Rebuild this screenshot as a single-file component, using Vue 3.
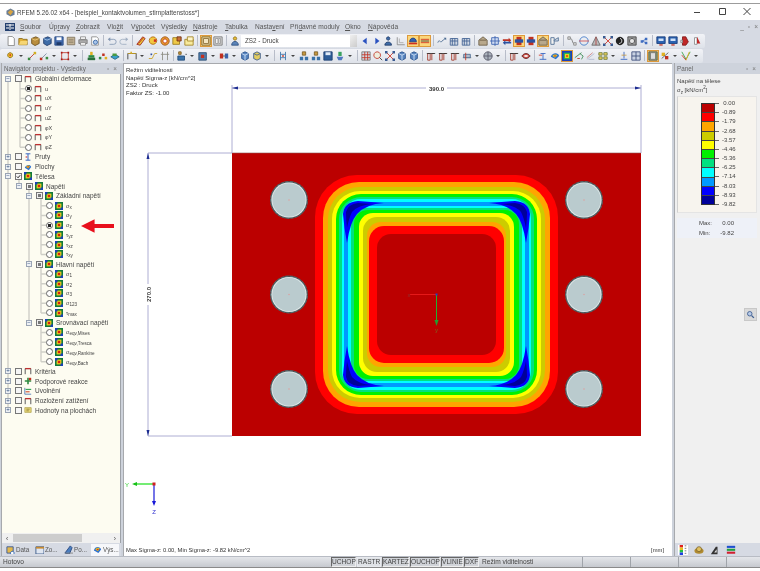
<template>
  <div class="window">
    <header class="titlebar">
      <svg class="app-icon" viewBox="0 0 10 10">
        <path d="M5 .5 9.5 3v4.5L5 9.5.5 7V3z" fill="#6d7f94" />
        <path d="M5 2 8 4 5 8 2 5z" fill="#d9a441" />
      </svg>
      <span class="title">RFEM 5.26.02 x64 - [beispiel_kontaktvolumen_stirnplattenstoss*]</span>
      <div class="win-btns">
        <svg viewBox="0 0 10 10"><path d="M2 5.5h6" stroke="#444" /></svg>
        <svg viewBox="0 0 10 10"><path d="M2.5 1.5h6v6h-6z" fill="none" stroke="#444" /></svg>
        <svg viewBox="0 0 10 10"><path d="m1.5 1 7 7m0-7-7 7" stroke="#444" /></svg>
      </div>
    </header>

    <nav class="menubar">
      <svg class="menu-logo" viewBox="0 0 10 10">
        <path d="M0 1h10v8H0z" fill="#24406f" />
        <path d="M1 3h8M1 6h3m2 0h3M5 2v6" stroke="#fff" />
      </svg>
      <span v-for="m in menus" :key="m.a + m.b" class="menu-item" :style="{ width: m.w + 'px' }">{{ m.a }}<u>{{ m.u }}</u>{{ m.b }}</span>
      <div class="mdi-btns"><span>_</span><span>▫</span><span>×</span></div>
    </nav>

    <div class="toolrow">
      <div class="tools">
        <template v-for="(t, i) in row1" :key="i">
          <span v-if="t.sep" class="sep"></span>
          <span v-else-if="t.arrow" class="drop"></span>
          <div v-else-if="t.select" class="case-select"><span>ZS2 - Druck</span><i></i></div>
          <svg v-else class="tool" :class="{ on: t.on }" viewBox="0 0 12 12">
            <path v-for="(p, j) in icons[t.name]" :key="j" :d="p[0]" :fill="p[1]" :stroke="p[2] || 'none'" stroke-width="1" />
          </svg>
        </template>
      </div>
    </div>
    <div class="toolrow">
      <div class="tools">
        <template v-for="(t, i) in row2" :key="i">
          <span v-if="t.sep" class="sep"></span>
          <span v-else-if="t.arrow" class="drop"></span>
          <svg v-else class="tool" :class="{ on: t.on }" viewBox="0 0 12 12">
            <path v-for="(p, j) in icons[t.name]" :key="j" :d="p[0]" :fill="p[1]" :stroke="p[2] || 'none'" stroke-width="1" />
          </svg>
        </template>
      </div>
    </div>

    <main class="workspace">
      <aside class="navigator">
        <div class="dock-head">
          <span>Navigátor projektu - Výsledky</span>
          <em>▫</em><em>×</em>
        </div>
        <div class="tree">
          <svg class="tree-lines" viewBox="0 0 118 360">
            <path :d="treeLines" fill="none" stroke="#cfcfc8" stroke-width="1.4" />
          </svg>
          <div v-for="n in tree" :key="n.id" class="row" :style="{ paddingLeft: n.x + 'px' }">
            <span v-if="n.exp" class="expander" :style="{ marginLeft: n.expX + 'px' }">{{ n.exp }}</span>
            <span v-if="n.radio" class="radio" :class="{ dot: n.sel }"></span>
            <span v-else class="check" :class="n.state">
              <svg v-if="n.state === 'checked'" viewBox="0 0 6 6"><path d="m1 3 1.500 1.500L5 1.500" fill="none" stroke="#222" stroke-width="1.200" /></svg>
            </span>
            <svg class="node-icon" viewBox="0 0 10 10">
              <template v-if="n.icon === 'frame'">
                <path d="M1.500 9V2h7v7" fill="none" stroke="#555" stroke-width="1.200" />
                <path d="M1.500 2h7" stroke="#c03030" stroke-width="1.600" />
              </template>
              <template v-else-if="n.icon === 'beam'">
                <path d="M2 9h6M5 9V1M2 1h6" stroke="#3060c0" stroke-width="1.200" />
                <path d="M2 5h2" stroke="#d03030" stroke-width="1.400" />
              </template>
              <template v-else-if="n.icon === 'surf'">
                <path d="M1 6c1-4 7-5 8-1L6 9z" fill="#2a6fd0" />
                <path d="M2.500 5c1-2 4-2.500 5-1L5.500 7z" fill="#e0c020" />
                <path d="M4 4.800c1-1 2-1 2.500 0L5 6z" fill="#e03020" />
              </template>
              <template v-else-if="n.icon === 'react'">
                <path d="M4 1h2v3h3v2H6v3H4V6H1V4h3z" fill="#2e8b40" />
                <path d="M6 1h3v3H6z" fill="#c03020" />
              </template>
              <template v-else-if="n.icon === 'rel'">
                <path d="M1 1v8h8" fill="none" stroke="#4070b0" />
                <path d="M2 3h7" stroke="#30a050" stroke-width="1.400" />
                <path d="M2 6h5" stroke="#d05030" stroke-width="1.400" />
              </template>
              <template v-else-if="n.icon === 'note'">
                <path d="M1 2h8v6H1z" fill="#e6d67a" stroke="#a99a40" stroke-width=".8" />
                <path d="M3 4h4M3 6h3" stroke="#7a6a20" stroke-width=".8" />
              </template>
              <template v-else>
                <path d="M0 0h10v10H0z" fill="#0f7a3a" />
                <path d="M2 2h6v6H2z" fill="#e8d020" />
                <path d="M3.500 3.500h3v3h-3z" fill="#d82010" />
                <path d="M0 0h3v3H0zM7 7h3v3H7z" fill="#1c3fb8" />
              </template>
            </svg>
            <span class="label" :class="{ small: n.radio }">{{ n.text }}<sub v-if="n.sub">{{ n.sub }}</sub></span>
          </div>
          <svg class="red-arrow" viewBox="0 0 34 14">
            <path d="M0 7 14 0v5h20v4H14v5z" fill="#e8101c" />
          </svg>
        </div>
        <div class="hscroll"><span>‹</span><i></i><span>›</span></div>
        <div class="dock-tabs">
          <span v-for="t in navTabs" :key="t.text" class="dock-tab" :class="{ current: t.current }">
            <svg viewBox="0 0 10 10">
              <path v-for="(p, j) in icons[t.icon]" :key="j" :d="p[0]" :fill="p[1]" :stroke="p[2] || 'none'" />
            </svg>
            {{ t.text }}
          </span>
        </div>
      </aside>

      <section class="view">
        <div class="view-info">
          <div>Režim viditelnosti</div>
          <div>Napětí Sigma-z [kN/cm^2]</div>
          <div>ZS2 : Druck</div>
          <div>Faktor ZS: -1.00</div>
        </div>
        <svg class="canvas" viewBox="124 63 548 493">
          <rect x="232" y="153" width="409" height="283" fill="#bb0000" />
          <path d="M232 153h409" stroke="#8a5050" stroke-width=".6" />
          <rect
            v-for="b in bands"
            :key="b.x"
            :x="b.x"
            :y="b.y"
            :width="873 - 2 * b.x"
            :height="589 - 2 * b.y"
            :rx="b.r"
            :fill="b.c"
          />
          <g v-for="(tr, i) in mirrors" :key="i" :transform="tr">
            <path d="M343 214Q344 202 358 201L384 203Q366 204 357 214 350 222 347 243 344 228 343 214Z" fill="#0000ff" />
            <path d="M346 212Q348 204 358 203L372 204Q358 205 352 212 349 218 347 228 346 220 346 212Z" fill="#00009a" />
          </g>

          <g v-for="b in bolts" :key="b[0] + '-' + b[1]">
            <circle :cx="b[0]" :cy="b[1]" r="19" fill="#4f686c" />
            <circle :cx="b[0]" :cy="b[1]" r="18.400" fill="none" stroke="#6a2a2a" stroke-width=".8" stroke-dasharray="1.500 3" />
            <circle :cx="b[0]" :cy="b[1]" r="17.600" fill="#e4ecec" />
            <circle :cx="b[0]" :cy="b[1]" r="16.700" fill="#bacbce" />
            <circle :cx="b[0]" :cy="b[1]" r=".7" fill="#e09a9a" />
          </g>

          <g fill="none" stroke="#9b9bc8" stroke-width=".8">
            <path d="M232 88h409M232 85v68M641 85v68" />
            <path d="M148 153h84M148 436h84M148 153v283" />
          </g>
          <g fill="#1c2c90">
            <path d="m232 88 6-1.500v3zM641 88l-6-1.500v3zM148 153l-1.500 6h3zM148 436l-1.500-6h3z" />
          </g>
          <rect x="426" y="84" width="21" height="8" fill="#fff" />
          <text x="436.500" y="90.500" class="dim">390.0</text>
          <rect x="144" y="284" width="8" height="21" fill="#fff" />
          <text class="dim" transform="translate(150.500 294.500) rotate(-90)">270.0</text>

          <path d="M437 294.500h-27" stroke="#f02020" stroke-width=".8" />
          <path d="M436.500 295v26" stroke="#20b030" />
          <path d="m436.500 326-2-6h4z" fill="#20a030" />
          <rect x="435.500" y="293.500" width="2" height="2" fill="#2040c0" />
          <text x="409" y="297" class="axis" fill="#903030">x</text>
          <text x="436.500" y="325" class="axis" fill="#806020" dy="7">y</text>

          <path d="M154 484h-20" stroke="#18e018" stroke-width="1.200" />
          <path d="m132 484 5-2v4z" fill="#18c018" />
          <path d="M154 484v19" stroke="#1818d8" stroke-width="1.200" />
          <path d="m154 506-2-5h4z" fill="#1818d8" />
          <rect x="152.500" y="482.500" width="3" height="3" fill="#d02020" />
          <text x="127" y="487" class="axis" fill="#30d030">Y</text>
          <text x="154" y="514" class="axis" fill="#3030d0">Z</text>
        </svg>
        <div class="view-foot">
          <span>Max Sigma-z: 0.00, Min Sigma-z: -9.82 kN/cm^2</span>
          <span>[mm]</span>
        </div>
      </section>

      <aside class="panel">
        <div class="dock-head">
          <span>Panel</span>
          <em>▫</em><em>×</em>
        </div>
        <div class="panel-body">
          <div class="panel-title">Napětí na tělese</div>
          <div class="panel-title">σ<sub>z</sub> [kN/cm<sup>2</sup>]</div>
          <div class="legend">
            <div class="scale">
              <i v-for="c in legendColors" :key="c" :style="{ background: c }"></i>
            </div>
            <div class="scale-labels">
              <span v-for="v in legendValues" :key="v">{{ v }}</span>
            </div>
          </div>
          <div class="minmax">
            <div><span>Max:</span><span>0.00</span></div>
            <div><span>Min:</span><span>-9.82</span></div>
          </div>
          <button class="lens-btn" type="button" aria-label="Lupa">
            <svg viewBox="0 0 12 12">
              <circle cx="5" cy="5" r="3" fill="#b8cbe8" stroke="#3f5f92" stroke-width="1.200" />
              <path d="m7.500 7.500 3 3" stroke="#3f5f92" stroke-width="1.800" />
            </svg>
          </button>
        </div>
        <div class="panel-tabs">
          <svg viewBox="0 0 12 12">
            <path d="M0 0h12v12H0z" fill="#fff" />
            <path d="M2 0h4v3H2z" fill="#e02020" /><path d="M2 3h4v3H2z" fill="#e0c020" />
            <path d="M2 6h4v3H2z" fill="#20c040" /><path d="M2 9h4v3H2z" fill="#2040e0" />
            <path d="M8 1h2M8 4h2M8 7h2M8 10h2" stroke="#666" />
          </svg>
          <svg viewBox="0 0 12 12">
            <ellipse cx="6" cy="7" rx="5.500" ry="3.500" fill="#b08a30" />
            <ellipse cx="6" cy="5" rx="3" ry="3" fill="#e0c060" stroke="#6a5520" stroke-width=".8" />
          </svg>
          <svg viewBox="0 0 12 12">
            <path d="M1 11 7 2h2v9z" fill="#333" /><path d="M5 9l3-4v4z" fill="#ddd" />
          </svg>
          <svg viewBox="0 0 12 12">
            <path d="M1 1h10v2.500H1z" fill="#2050d0" /><path d="M1 4.500h10V7H1z" fill="#20a040" />
            <path d="M1 8h10v2.500H1z" fill="#d02030" />
          </svg>
        </div>
      </aside>
    </main>

    <footer class="statusbar">
      <span class="ready">Hotovo</span>
      <span v-for="b in statusButtons" :key="b.t" class="snap" :class="{ up: b.up }" :style="{ width: b.w + 'px' }">{{ b.t }}</span>
      <span class="mode">Režim viditelnosti</span>
      <span v-for="c in 3" :key="c" class="cell"></span>
    </footer>
  </div>
</template>

<script setup>
const menus = [
  { a: '', u: 'S', b: 'oubor', w: 29 },
  { a: 'Úp', u: 'r', b: 'avy', w: 27 },
  { a: '', u: 'Z', b: 'obrazit', w: 31 },
  { a: 'Vlo', u: 'ž', b: 'it', w: 24 },
  { a: 'V', u: 'ý', b: 'počet', w: 30 },
  { a: 'Výsled', u: 'k', b: 'y', w: 32 },
  { a: '', u: 'N', b: 'ástroje', w: 32 },
  { a: '', u: 'T', b: 'abulka', w: 30 },
  { a: 'Nasta', u: 'v', b: 'ení', w: 35 },
  { a: 'Pří', u: 'd', b: 'avné moduly', w: 55 },
  { a: '', u: 'O', b: 'kno', w: 23 },
  { a: '', u: 'N', b: 'ápověda', w: 40 }
]

const icons = {
  doc: [['M2.500 .5h5l2.500 2.500v8.500h-7.500z', '#fff', '#808080']],
  open: [['M1 3h4l1 1h5v6.500H1z', '#e2b23c', '#8a6a18'], ['M1 10.500 3 6h8.500l-1 4.500z', '#f6d675']],
  boxo: [['M2 3 7 1l4 2v6l-5 2.500L2 9z', '#b98d3e', '#6a4d18'], ['M2 3l4 2 5-2', 'none', '#f0d080']],
  boxb: [['M2 3 7 1l4 2v6l-5 2.500L2 9z', '#3e6ca8', '#1f3a68'], ['M2 3l4 2 5-2', 'none', '#b0cff0']],
  disk: [['M1 1h10v10H1z', '#4169ad', '#274b84'], ['M3 1.500h6v3.500H3z', '#fff'], ['M3 7.500h6v3.500H3z', '#1f3a68']],
  tan: [['M1.500 1.500h9v9h-9z', '#c8b89a', '#7d705a'], ['M3 4h6M3 6h6M3 8h6', 'none', '#8c7e66']],
  print: [['M3 1h6v3H3z', '#fff', '#888'], ['M1 4.500h10v4.500H1z', '#aaa', '#777'], ['M3 8h6v3H3z', '#fff', '#888']],
  prev: [['M2 1h6l2 2v8H2z', '#fff', '#888'], ['M6.500 7.500m-2.500 0a2.500 2.500 0 1 0 5 0a2.500 2.500 0 1 0-5 0', '#a9c5ea', '#3060a0']],
  undo: [['M2 4h6a2.500 2.500 0 0 1 0 6H3', 'none', '#8396b2'], ['M4 1.500 1 4l3 2.500z', '#8396b2']],
  redo: [['M10 4H4a2.500 2.500 0 0 0 0 6h5', 'none', '#a0aec2'], ['M8 1.500 11 4 8 6.500z', '#a0aec2']],
  pen: [['M1 10 8 1l3 2-6 8z', '#e8c838', '#a02020'], ['M3 9 9 2', 'none', '#c02020']],
  sun: [['M6 1a4.500 4.500 0 1 0 .01 0z', '#f2c840', '#b06a10'], ['M7 4h3v3H7z', '#d03020']],
  target: [['M6 1a5 5 0 1 0 .01 0z', '#e8a030', '#a04a10'], ['M6 3.500a2.500 2.500 0 1 0 .01 0z', '#fff', '#c03010']],
  ysq: [['M1 2h8v8H1z', '#efc948', '#96781c'], ['M6 1h5v5H6z', '#c87038', '#703010']],
  fold: [['M1 4h10v7H1z', '#f8ea9c', '#a08020'], ['M4 1h7v5H4z', '#fff6c8', '#a08020']],
  tile: [['M1 1h10v10H1z', '#d4d4d4', '#777'], ['M3 3h3v6H3zM7 3h2v6H7z', '#f0f0f0', '#999']],
  tileon: [['M1 1h10v10H1z', '#e8d4a0', '#7a5c24'], ['M3 3h6v6H3z', '#f4e6c0', '#8a6c34']],
  pers: [['M6 1a2 2 0 1 0 .01 0z', '#e8c038', '#8a6a18'], ['M2 11c0-6 8-6 8 0z', '#5a83b8', '#2d4f80']],
  left: [['M8 2 3 6l5 4z', '#2a52c0']],
  right: [['M4 2l5 4-5 4z', '#2a52c0']],
  per2: [['M5 1a2 2 0 1 0 .01 0z', '#3e6ca8', '#1f3a68'], ['M1 11c0-5 8-5 8 0z', '#3e6ca8', '#1f3a68']],
  grid: [['M1.500 1.500v9h9', 'none', '#888'], ['M4 3v5h5', 'none', '#aaa']],
  hot: [['M2 7c0-6 8-6 8 0z', '#3060b0', '#1c3c80'], ['M1 8h10v2H1z', '#d03020']],
  hot2: [['M1 4h10', 'none', '#d03020'], ['M1 6h10', 'none', '#303030'], ['M1 8h10', 'none', '#d03020']],
  wave: [['M1 8c2-6 3 2 5-2l4-3', 'none', '#4a6a90'], ['M8 2h3v3z', '#4a6a90']],
  bars: [['M1.500 3h9v8h-9z', '#d0d8e4', '#3f5f92'], ['M4 3v8M7 3v8M1.500 6h9', 'none', '#3f5f92']],
  house: [['M1 5 6 1l5 4v6H1z', '#b8a88c', '#6a5c44'], ['M2 5h8', 'none', '#6a5c44']],
  cross: [['M2 2h8v8H2z', '#cfdcf2', '#3a62b0'], ['M6 0v12M0 6h12', 'none', '#3a62b0']],
  swap: [['M1 4h7V2l3 3-3 3V6H1z', '#c03020'], ['M11 9H4v2L1 8l3-3v2h7z', '#2a52a0']],
  swap2: [['M3 1h6v10H3z', '#c03020'], ['M1 4h10v4H1z', '#2a52a0']],
  outl: [['M1 2h4v8H1z', '#f2f2f2', '#4a6a90'], ['M5 5l5-3v4H5z', '#d8e0ec', '#4a6a90']],
  curve: [['M2 2c6 0 3 8 8 8', 'none', '#777'], ['M1 1h3v3H1zM8 8h3v3H8z', '#ddd', '#888']],
  ring: [['M6 1a5 5 0 1 0 .01 0z', 'none', '#3e78c8'], ['M0 6h12', 'none', '#d04a4a']],
  tri: [['M6 1 11 11H1z', '#bbb', '#666'], ['M6 1v10', 'none', '#b04040']],
  xred: [['M1 1l10 10M11 1 1 11', 'none', '#d03020'], ['M0 0h3v3H0zM9 9h3v3H9zM9 0h3v3H9zM0 9h3v3H0z', '#3a5a90']],
  swirl: [['M6 1a5 5 0 1 0 .01 0z', '#222'], ['M6 3c3 0 3 6-1 6', 'none', '#fff']],
  gbox: [['M1 1h10v10H1z', '#999', '#444'], ['M6 3a3 3 0 1 0 .01 0z', '#e8e8e8', '#444']],
  dots: [['M2 5h3v3H2zM7 2h3v3H7zM7 7h3v3H7z', '#3e6cc0'], ['M4 6l4-2m-4 2 4 2', 'none', '#3e6cc0']],
  scr: [['M1 1h10v8H1z', '#2a62b0', '#173a78'], ['M3 3h6v3H3z', '#cfe0f8'], ['M4 10h4v1.500H4z', '#c03020']],
  redp: [['M3 1h4l3 6-3 4H3z', '#c02828', '#801818'], ['M1 5h2v3H1z', '#e8e8e8', '#888']],
  redw: [['M3 2h3v8H3z', '#fff', '#888'], ['M6 1l4 8H6z', '#c02828']],
  ydot: [['M5 2a3 3 0 1 0 .01 0z', '#ecc22c', '#8a6a18'], ['M5 4a1 1 0 1 0 .01 0z', '#d03020']],
  line1: [['M2 10 10 2', 'none', '#c03020'], ['M1 8h3v3H1z', '#3a8a40'], ['M8 1h3v3H8z', '#d0b020']],
  line2: [['M2 10 9 3', 'none', '#7a8aa0'], ['M1 8h3v3H1z', '#c03020'], ['M8 7h3v3H8z', '#3a8a40']],
  nodes: [['M2 2h8v8H2z', 'none', '#c03020'], ['M1 1h2v2H1zM9 1h2v2H9zM1 9h2v2H1zM9 9h2v2H9z', '#a01818']],
  gperson: [['M5 1h3v4H5z', '#e0b020'], ['M3 5h7v3H3z', '#2e8b40'], ['M2 8h9v3H2z', '#2a6f3a']],
  gdots: [['M1 7h3v3H1z', '#2e8b40'], ['M5 3h3v3H5z', '#c03020'], ['M8 7h3v3H8z', '#e0b020']],
  gblue: [['M1 7l5-3 5 3-5 3z', '#38a0c8', '#206080'], ['M3 3h5v3H3z', '#4a9a40']],
  frame: [['M1 10V3h10v7', 'none', '#333'], ['M1 3h10', 'none', '#c8a020'], ['M4 1h2v2H4z', '#d8b030']],
  yline: [['M1 9h4l3-6h3', 'none', '#c8a020'], ['M3 3h2v2H3z', '#3050a0']],
  posts: [['M3 1v10M9 1v10M1 4h10', 'none', '#8a8a80']],
  ibar: [['M1 6h8v5H1z', '#3a72a8', '#1f4a78'], ['M2 1h3v3H2z', '#c89a40', '#7a5c24'], ['M10 4h2', 'none', '#555']],
  redsq: [['M1 2h9v9H1z', '#4f7fb0', '#284a70'], ['M3.500 4.500h4v4h-4z', '#c03020']],
  tee: [['M1 3h4v6H1z', '#c03020'], ['M7 3h4v6H7z', '#3a62a8'], ['M5 6h2', 'none', '#333']],
  cube: [['M2 3 6 1l4 2v6l-4 2-4-2z', '#5a86c0', '#224a88'], ['M2 3l4 2 4-2M6 5v6', 'none', '#d8e8fa']],
  cubey: [['M2 3 6 1l4 2v6l-4 2-4-2z', '#e2cc60', '#3a5a90'], ['M2 3l4 2 4-2', 'none', '#3a5a90']],
  ladder: [['M3 1v10M9 1v10M3 4h6M3 8h6', 'none', '#3a72a8'], ['M5 5h2v2H5z', '#c03020']],
  dset: [['M1 7h4v4H1zM7 7h4v4H7z', '#3a72a8'], ['M4 1h4v4H4z', '#c89a40', '#7a5c24']],
  tsave: [['M1 1h10v10H1z', '#2d5c98', '#1c3c70'], ['M3 1.500h6V5H3z', '#dfe9f6']],
  dkey: [['M4 1h4v5H4z', '#38a060'], ['M2 7h8l-2 4H4z', '#5078c0']],
  mesh: [['M1 1h10v10H1z', '#d3d8e2', '#777'], ['M1 4.500h10M1 8h10M4.500 1v10M8 1v10', 'none', '#c03020']],
  tmag: [['M5 1a4 4 0 1 0 .01 0z', '#eed', '#c03020'], ['M8 8l3 3', 'none', '#333']],
  pipe: [['M1 8h10', 'none', '#666'], ['M2 4h8v4H2z', '#b0bccc', '#4a6a90'], ['M4 2h1v9H4z', '#c03020']],
  glob: [['M6 1a5 5 0 1 0 .01 0z', '#aab2bc', '#556'], ['M1 6h10M6 1v10', 'none', '#556']],
  pf: [['M2 11V3h3v8zM7 11V3h3', 'none', '#a03020'], ['M1 3h10', 'none', '#333']],
  eye: [['M1 6c3-4 7-4 10 0-3 4-7 4-10 0z', '#c85048', '#602020'], ['M4 5h4v2H4z', '#fff']],
  beam: [['M2 10h8M6 10V3M3 3h6', 'none', '#3060c0'], ['M1 5h4', 'none', '#d03020']],
  surf: [['M1 7c1-5 9-6 10-1l-4 4z', '#2a6fd0'], ['M3 6c1-2 5-2 6-1L6 8z', '#e0c020'], ['M5 5.500h2v1H5z', '#d03020']],
  cont: [['M0 0h12v12H0z', '#1c3fb8'], ['M2 2h8v8H2z', '#20b050'], ['M3.500 3.500h5v5h-5z', '#e8d020'], ['M5 5h2v2H5z', '#d82010']],
  beams: [['M1 8 9 2', 'none', '#3a8a50'], ['M7 3l4 3-2 4', 'none', '#3a8a50'], ['M4 9h3', 'none', '#c03020']],
  fan: [['M1 10 10 3', 'none', '#b0b8d0'], ['M1 8 8 2', 'none', '#d08080'], ['M3 10h7', 'none', '#b0b8d0']],
  quad: [['M1 2h4v3H1zM7 2h4v3H7zM1 7h4v3H1zM7 7h4v3H7z', '#ecd05a', '#6a7a3a']],
  peak: [['M6 1v8M2 10h8', 'none', '#3060c0'], ['M3 5h6', 'none', '#c89a40']],
  pane: [['M1 1h10v10H1z', '#c9d2e2', '#3a4a78'], ['M1 6h10M6 1v10', 'none', '#3a4a78']],
  leg: [['M1 1h10v10H1z', '#88a068', '#555'], ['M3 2h6v8H3z', '#ddd', '#777']],
  pal: [['M2 2h4v4H2z', '#e0b020'], ['M6 6h4v4H6z', '#c03020'], ['M2 9l8-7', 'none', '#555']],
  rain: [['M1 1l5 9 5-9', 'none', '#30a040'], ['M1 5l5 6', 'none', '#d03020'], ['M10 1 6 11', 'none', '#e8b020']],
  data: [['M1 2h7v7H1z', '#e3b84c', '#3a5a98'], ['M7 7a2 2 0 1 0 .01 0z', '#fff', '#2a62b0']],
  calendar: [['M1 2h9v8H1z', '#dfe6f1', '#3a5a88'], ['M1 2h9v2H1z', '#c88a30']],
  tool: [['M1 9 7 1l2 2-3 7z', '#4a7ec0', '#2a4a80'], ['M1 9h9', 'none', '#888']],
  res: [['M1 6c1-5 7-5 8-1L6 9z', '#2a6fd0'], ['M2.500 5c1-2 4-2.500 5-1L5.500 7z', '#e0c020'], ['M4 4.800c1-1 2-1 2.500 0L5 6z', '#e03020']]
}

// toolbar rows: "|" separator, "v" dropdown arrow, "*" pressed button, "@" case select
function parseTools(text) {
  return text.split(/\s+/).map((w) => {
    if (w === '|') return { sep: true }
    if (w === 'v') return { arrow: true }
    if (w === '@') return { select: true }
    if (w[0] === '*') return { name: w.slice(1), on: true }
    return { name: w }
  })
}

const row1 = parseTools(
  'doc open boxo boxb disk tan print prev | undo redo | pen sun target ysq fold | *tileon tile | pers @ left right per2 grid *hot *hot2 | wave bars bars | house cross swap *swap2 swap2 *house outl | curve ring tri xred swirl gbox dots | scr scr redp redw'
)
const row2 = parseTools(
  'ydot v line1 line2 v nodes v | gperson gdots gblue | frame v yline posts | ibar v redsq v tee v cube cubey v | ladder v dset dset tsave dkey v | mesh tmag xred cube cube | pf pf pf pipe v glob v | pf eye | beam surf *cont beams fan quad v peak pane | *leg pal v rain v'
)

// x offsets are relative to the tree, which starts 2px from the window edge
const depthOf = { a: 6, b: 17, c: 27 }
const leafX = { u: 23, l: 44 }

function group(id, lvl, text, icon, exp, state) {
  return { id, text, icon, exp, state, expX: depthOf[lvl] - 3, x: 0 }
}
function leaf(id, lvl, text, sub, icon, sel) {
  return { id, text, sub, icon, radio: true, sel, x: leafX[lvl] }
}

const tree = [
  group('gd', 'a', 'Globální deformace', 'frame', '−'),
  leaf('u', 'u', 'u', '', 'frame', true),
  leaf('ux', 'u', 'uX', '', 'frame'),
  leaf('uy', 'u', 'uY', '', 'frame'),
  leaf('uz', 'u', 'uZ', '', 'frame'),
  leaf('px', 'u', 'φX', '', 'frame'),
  leaf('py', 'u', 'φY', '', 'frame'),
  leaf('pz', 'u', 'φZ', '', 'frame'),
  group('pr', 'a', 'Pruty', 'beam', '+'),
  group('pl', 'a', 'Plochy', 'surf', '+'),
  group('te', 'a', 'Tělesa', 'cont', '−', 'checked'),
  group('na', 'b', 'Napětí', 'cont', '−', 'mixed'),
  group('za', 'c', 'Základní napětí', 'cont', '−', 'mixed'),
  leaf('sx', 'l', 'σ', 'x', 'cont'),
  leaf('sy', 'l', 'σ', 'y', 'cont'),
  leaf('sz', 'l', 'σ', 'z', 'cont', true),
  leaf('tyz', 'l', 'τ', 'yz', 'cont'),
  leaf('txz', 'l', 'τ', 'xz', 'cont'),
  leaf('txy', 'l', 'τ', 'xy', 'cont'),
  group('hl', 'c', 'Hlavní napětí', 'cont', '−', 'mixed'),
  leaf('s1', 'l', 'σ', '1', 'cont'),
  leaf('s2', 'l', 'σ', '2', 'cont'),
  leaf('s3', 'l', 'σ', '3', 'cont'),
  leaf('s123', 'l', 'σ', '123', 'cont'),
  leaf('tm', 'l', 'τ', 'max', 'cont'),
  group('sr', 'c', 'Srovnávací napětí', 'cont', '−', 'mixed'),
  leaf('e1', 'l', 'σ', 'eqv,Mises', 'cont'),
  leaf('e2', 'l', 'σ', 'eqv,Tresca', 'cont'),
  leaf('e3', 'l', 'σ', 'eqv,Rankine', 'cont'),
  leaf('e4', 'l', 'σ', 'eqv,Bach', 'cont'),
  group('kr', 'a', 'Kritéria', 'frame', '+'),
  group('po', 'a', 'Podporové reakce', 'react', '+'),
  group('uv', 'a', 'Uvolnění', 'rel', '+'),
  group('ro', 'a', 'Rozložení zatížení', 'frame', '+'),
  group('ho', 'a', 'Hodnoty na plochách', 'note', '+')
]

// connector lines of the tree, y in rows (row height 9.75)
const rowY = (i) => i * 9.75 + 5
function stem(x, from, to, kids) {
  let d = `M${x} ${rowY(from)}V${rowY(to)}`
  kids.forEach((k) => {
    d += `M${x} ${rowY(k)}H${x + 5}`
  })
  return d
}
const treeLines =
  stem(6, 0, 34, []) +
  stem(18, 0, 7, [1, 2, 3, 4, 5, 6, 7]) +
  stem(17, 10, 11, []) +
  stem(27, 11, 25, []) +
  stem(39, 12, 18, [13, 14, 15, 16, 17, 18]) +
  stem(39, 19, 24, [20, 21, 22, 23, 24]) +
  stem(39, 25, 29, [26, 27, 28, 29])

const navTabs = [
  { text: 'Data', icon: 'data' },
  { text: 'Zo...', icon: 'calendar' },
  { text: 'Po...', icon: 'tool' },
  { text: 'Výs...', icon: 'res', current: true }
]

const bands = [
  { x: 315, y: 175, r: 42, c: '#ff0000' },
  { x: 323, y: 182, r: 36, c: '#ffa500' },
  { x: 328, y: 187, r: 32, c: '#cccc00' },
  { x: 332, y: 191, r: 28, c: '#ffff00' },
  { x: 336, y: 194, r: 25, c: '#00f000' },
  { x: 339, y: 197, r: 22, c: '#00e080' },
  { x: 342, y: 199, r: 19, c: '#00ffff' },
  { x: 344, y: 202, r: 16, c: '#0099ff' },
  { x: 348, y: 206, r: 14, c: '#00ffff' },
  { x: 351, y: 208, r: 14, c: '#00e080' },
  { x: 354, y: 210, r: 14, c: '#00f000' },
  { x: 359, y: 213, r: 14, c: '#ffff00' },
  { x: 363, y: 217, r: 14, c: '#cccc00' },
  { x: 367, y: 222, r: 14, c: '#ffa500' },
  { x: 369, y: 226, r: 15, c: '#ff0000' },
  { x: 377, y: 234, r: 14, c: '#bb0000' }
]
const mirrors = ['', 'translate(873 0) scale(-1 1)', 'translate(0 589) scale(1 -1)', 'translate(873 589) scale(-1 -1)']
const bolts = [
  [289, 200], [289, 294.5], [289, 389],
  [584, 200], [584, 294.5], [584, 389]
]

const legendColors = ['#bb0000', '#ff0000', '#ffa500', '#cccc00', '#ffff00', '#00f000', '#00e080', '#00ffff', '#0099ff', '#0000ff', '#00009a']
const legendValues = ['0.00', '-0.89', '-1.79', '-2.68', '-3.57', '-4.46', '-5.36', '-6.25', '-7.14', '-8.03', '-8.93', '-9.82']

const statusButtons = [
  { t: 'UCHOP', w: 25 },
  { t: 'RASTR', w: 24, up: true },
  { t: 'KARTEZ', w: 27 },
  { t: 'OUCHOP', w: 30 },
  { t: 'VLINIE', w: 22 },
  { t: 'DXF', w: 15 }
]
</script>

<style>
html,
body {
  margin: 0;
  background: #fff;
}
</style>

<style scoped>
.window {
  width: 760px;
  height: 571px;
  box-sizing: border-box;
  padding: 3px 0 3px;
  display: flex;
  flex-direction: column;
  overflow: hidden;
  background: #fff;
  font-family: "Liberation Sans", Arial, sans-serif;
  color: #333;
  font-size: 6.6px;
  filter: blur(0.3px);
}

.titlebar {
  height: 17px;
  flex: none;
  display: flex;
  align-items: center;
  padding-left: 6px;
  border-top: 1px solid #9c9c9c;
  box-sizing: border-box;
  background: #fff;
}
.app-icon {
  width: 9px;
  height: 9px;
  margin-right: 2px;
}
.title {
  font-size: 6.3px;
  color: #444;
}
.win-btns {
  margin-left: auto;
  display: flex;
  gap: 15px;
  padding-right: 8px;
}
.win-btns svg {
  width: 10px;
  height: 10px;
}

.menubar {
  height: 13px;
  flex: none;
  display: flex;
  align-items: center;
  padding-left: 5px;
  background: #d6dae3;
  color: #555;
  font-size: 6.6px;
}
.menu-logo {
  width: 10px;
  height: 10px;
  margin-right: 5px;
}
.menu-item {
  flex: none;
  white-space: nowrap;
}
.mdi-btns {
  margin-left: auto;
  display: flex;
  gap: 4px;
  padding-right: 2px;
  color: #777;
}

.toolrow {
  height: 15px;
  flex: none;
  background: #d6dae3;
  display: flex;
  align-items: center;
}
.tools {
  height: 14px;
  display: flex;
  align-items: center;
  padding: 0 2px 0 5px;
  background: linear-gradient(#f2f3f7, #dee2e9);
  border-radius: 2px;
  flex: none;
}
.tool {
  width: 10px;
  height: 10px;
  padding: 1px;
  flex: none;
}
.tool.on {
  background: #fbd77c;
  outline: 1px solid #dd9a3c;
  outline-offset: -1px;
}
.sep {
  width: 1px;
  height: 11px;
  margin: 0 2px;
  background: #b8bdc9;
  flex: none;
}
.drop {
  flex: none;
  width: 0;
  height: 0;
  margin: 0 3px 0 2px;
  border: 2px solid transparent;
  border-top: 2.5px solid #444;
  border-bottom: 0;
}
.case-select {
  width: 116px;
  height: 12px;
  margin: 0 2px 0 0;
  display: flex;
  align-items: center;
  padding-left: 4px;
  box-sizing: border-box;
  background: #fff;
  font-size: 6.3px;
  color: #444;
  flex: none;
}
.case-select i {
  margin-left: auto;
  width: 7px;
  height: 12px;
  background: linear-gradient(135deg, #f0f0f0, #ccc);
}

.workspace {
  flex: 1;
  min-height: 0;
  display: flex;
  gap: 2px;
  background: #cdd2db;
  padding-left: 1px;
}

.navigator {
  width: 120px;
  flex: none;
  display: flex;
  flex-direction: column;
  background: #d6dae3;
  border-left: 1px solid #a7a9ad;
  box-sizing: border-box;
}
.dock-head {
  height: 11px;
  flex: none;
  display: flex;
  align-items: center;
  gap: 4px;
  padding: 0 4px 0 2px;
  background: #ced3dc;
  color: #666;
  font-size: 6.3px;
}
.dock-head span {
  margin-right: auto;
  white-space: nowrap;
}
.dock-head em {
  font-style: normal;
  color: #777;
}

.tree {
  position: relative;
  flex: 1;
  min-height: 0;
  background: #fdfcf1;
  border-right: 1px solid #9ea2a8;
}
.tree-lines {
  position: absolute;
  left: 0;
  top: 0;
  width: 118px;
  height: 360px;
}
.red-arrow {
  position: absolute;
  left: 79px;
  top: 145px;
  width: 33px;
  height: 14px;
}
.row {
  position: relative;
  height: 9.75px;
  display: flex;
  align-items: center;
  white-space: nowrap;
}
.expander {
  width: 6px;
  height: 6px;
  margin-right: 4px;
  border: 1px solid #9aa4b4;
  background: #eef1f5;
  color: #31507f;
  box-sizing: border-box;
  font-size: 6px;
  line-height: 3.500px;
  text-align: center;
  flex: none;
}
.check {
  width: 7px;
  height: 7px;
  margin-right: 2px;
  border: 1px solid #777;
  background: #f6f6f6;
  box-sizing: border-box;
  flex: none;
  display: flex;
}
.check svg {
  width: 100%;
  height: 100%;
}
.check.mixed {
  background: #f0f0f0;
  box-shadow: inset 0 0 0 1px #f0f0f0, inset 0 0 0 4px #777;
}
.radio {
  width: 7px;
  height: 7px;
  margin-right: 2px;
  border: 1px solid #666;
  border-radius: 50%;
  background: #fff;
  box-sizing: border-box;
  flex: none;
}
.radio.dot {
  background: radial-gradient(circle, #222 0 40%, #fff 45%);
}
.node-icon {
  width: 8px;
  height: 8px;
  margin-right: 3px;
  flex: none;
}
.label {
  color: #444;
  font-size: 6.5px;
}
.label.small {
  font-size: 5.5px;
}
.label sub {
  font-size: 4.6px;
  vertical-align: -1px;
  line-height: 0;
}

.hscroll {
  height: 10px;
  flex: none;
  display: flex;
  align-items: center;
  justify-content: space-between;
  padding: 0 4px;
  background: #f0f0f0;
  border-right: 1px solid #9ea2a8;
  color: #444;
  position: relative;
}
.hscroll i {
  position: absolute;
  left: 11px;
  width: 69px;
  height: 8px;
  background: #cdcdcd;
}
.dock-tabs {
  height: 13px;
  flex: none;
  display: flex;
  align-items: center;
  padding-left: 2px;
  gap: 1px;
  background: #d6dae3;
  color: #555;
  font-size: 6.3px;
}
.dock-tab {
  width: 28px;
  height: 12px;
  display: flex;
  align-items: center;
  gap: 1px;
  padding-left: 2px;
  box-sizing: border-box;
}
.dock-tab svg {
  width: 9px;
  height: 9px;
}
.dock-tab.current {
  background: #f6f7fa;
}

.view {
  flex: 1;
  min-width: 0;
  position: relative;
  background: #fff;
  color: #333;
  border-top: 1px solid #a7a9ad;
  border-left: 1px solid #a7a9ad;
  box-sizing: border-box;
}
.canvas {
  position: absolute;
  left: 0;
  top: -1px;
  width: 548px;
  height: 493px;
}
.dim {
  font: bold 6px "Liberation Sans", sans-serif;
  text-anchor: middle;
  fill: #333;
}
.axis {
  font: 6px "Liberation Sans", sans-serif;
  text-anchor: middle;
}
.view-info {
  position: absolute;
  z-index: 1;
  left: 2px;
  top: 3px;
  font-size: 6px;
  line-height: 7.500px;
}
.view-foot {
  position: absolute;
  z-index: 1;
  left: 2px;
  right: 8px;
  bottom: 3px;
  display: flex;
  justify-content: space-between;
  font-size: 5.800px;
}

.panel {
  width: 86px;
  flex: none;
  display: flex;
  flex-direction: column;
  background: #f0f0f0;
  border-left: 1px solid #a7a9ad;
  box-sizing: border-box;
}
.panel-body {
  position: relative;
  flex: 1;
  padding: 3px 3px 0 2px;
  font-size: 6px;
  color: #444;
}
.panel-title {
  line-height: 9px;
}
.panel-title sub,
.panel-title sup {
  font-size: 4.500px;
  line-height: 0;
}
.legend {
  height: 117px;
  margin-top: 1px;
  display: flex;
  padding: 6px 0 0 23px;
  box-sizing: border-box;
  background: #f7f4ee;
  border: 1px solid #e4e4e4;
  border-left-color: #d0d0d0;
}
.scale {
  width: 14px;
  height: 102px;
  display: flex;
  flex-direction: column;
  border: 1px solid #333;
  box-sizing: border-box;
  flex: none;
}
.scale i {
  flex: 1;
  border-bottom: 1px solid #444;
}
.scale i:last-child {
  border-bottom: 0;
}
.scale-labels {
  height: 110px;
  margin: -4px 0 0 7px;
  display: flex;
  flex-direction: column;
  justify-content: space-between;
  width: 13px;
  font-size: 6px;
}
.scale-labels span {
  position: relative;
  line-height: 9px;
  height: 9px;
  text-align: right;
}
.scale-labels span::before {
  content: "";
  position: absolute;
  left: -7px;
  top: 4px;
  width: 4px;
  height: 1px;
  background: #666;
}
.minmax {
  margin-top: 5px;
  height: 20px;
  padding: 1px 23px 0 22px;
  box-sizing: border-box;
  background: #eef1f8;
  font-size: 6px;
}
.minmax div {
  display: flex;
  justify-content: space-between;
  line-height: 9.500px;
}
.lens-btn {
  position: absolute;
  right: 3px;
  bottom: 222px;
  width: 13px;
  height: 13px;
  padding: 1px;
  border: 1px solid #c8c8c8;
  background: #dadada;
  display: flex;
}
.lens-btn svg {
  width: 100%;
  height: 100%;
}
.panel-tabs {
  height: 13px;
  flex: none;
  display: flex;
  align-items: center;
  gap: 6px;
  padding-left: 3px;
  background: #d6dae3;
}
.panel-tabs svg {
  width: 10px;
  height: 10px;
}

.statusbar {
  height: 12px;
  flex: none;
  display: flex;
  align-items: stretch;
  background: linear-gradient(#e4e6ea, #c6c9cf);
  border-top: 1px solid #b8bcc4;
  border-bottom: 1px solid #8a8a8a;
  box-sizing: border-box;
  color: #444;
  font-size: 6.6px;
  line-height: 10px;
}
.ready {
  width: 331px;
  padding-left: 3px;
  box-sizing: border-box;
  flex: none;
}
.snap {
  flex: none;
  box-sizing: border-box;
  border: 1px solid #666;
  border-right-color: #eee;
  border-bottom-color: #eee;
  background: #d0d3d8;
  margin-right: 1px;
  text-align: center;
  line-height: 8px;
  white-space: nowrap;
}
.snap.up {
  border-color: #e8eaee;
  background: #dfe2e6;
}
.mode {
  width: 103px;
  padding-left: 2px;
  box-sizing: border-box;
  flex: none;
  border-right: 1px solid #a0a4aa;
}
.cell {
  width: 47px;
  flex: none;
  border-right: 1px solid #a0a4aa;
}
</style>
